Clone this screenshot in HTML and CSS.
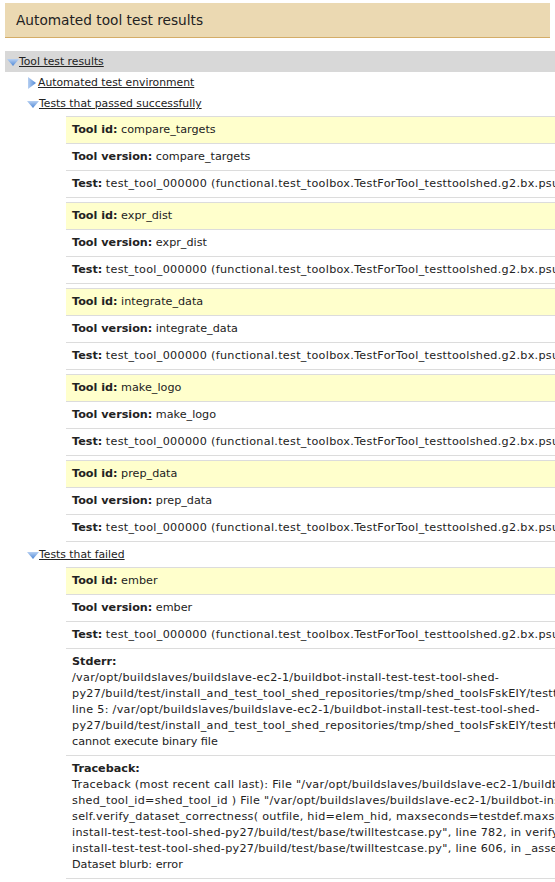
FILE: index.html
```html
<!DOCTYPE html>
<html>
<head>
<meta charset="utf-8">
<title>Automated tool test results</title>
<link rel="stylesheet" href="styles.css">
</head>
<body>
<div class="page">
  <div class="header"><h1 class="title">Automated tool test results</h1></div>

  <div class="tree">
    <div class="node node-root">
      <svg class="tri tri-down" width="12" height="7" viewBox="0 0 12 7"><defs><linearGradient id="gd" x1="0" y1="0" x2="0" y2="1"><stop offset="0" stop-color="#b7d0f2"/><stop offset="1" stop-color="#4f88d6"/></linearGradient></defs><polygon points="0,0 12,0 6,7" fill="url(#gd)"/></svg>
      <a class="link" href="#">Tool test results</a>
    </div>

    <div class="children">
      <div class="node">
        <svg class="tri tri-right" width="8" height="12" viewBox="0 0 8 12"><defs><linearGradient id="gr" x1="0" y1="0" x2="1" y2="0"><stop offset="0" stop-color="#b7d0f2"/><stop offset="1" stop-color="#4f88d6"/></linearGradient></defs><polygon points="0,0 8,6 0,12" fill="url(#gr)"/></svg>
        <a class="link" href="#">Automated test environment</a>
      </div>

      <div class="node">
        <svg class="tri tri-down" width="12" height="7" viewBox="0 0 12 7"><polygon points="0,0 12,0 6,7" fill="url(#gd)"/></svg>
        <a class="link" href="#">Tests that passed successfully</a>
      </div>

      <div class="tables">
        <div class="table">
          <div class="row row-id"><b>Tool id:</b> compare_targets</div>
          <div class="row"><b>Tool version:</b> compare_targets</div>
          <div class="row"><b>Test:</b> <span class="path">test_tool_000000 (functional.test_toolbox.TestForTool_testtoolshed.g2.bx.psu.edu_repos_boris_cnv_analysis_compare_targets_0.0.1)</span></div>
        </div>
        <div class="table">
          <div class="row row-id"><b>Tool id:</b> expr_dist</div>
          <div class="row"><b>Tool version:</b> expr_dist</div>
          <div class="row"><b>Test:</b> <span class="path">test_tool_000000 (functional.test_toolbox.TestForTool_testtoolshed.g2.bx.psu.edu_repos_boris_cnv_analysis_expr_dist_0.0.1)</span></div>
        </div>
        <div class="table">
          <div class="row row-id"><b>Tool id:</b> integrate_data</div>
          <div class="row"><b>Tool version:</b> integrate_data</div>
          <div class="row"><b>Test:</b> <span class="path">test_tool_000000 (functional.test_toolbox.TestForTool_testtoolshed.g2.bx.psu.edu_repos_boris_cnv_analysis_integrate_data_0.0.1)</span></div>
        </div>
        <div class="table">
          <div class="row row-id"><b>Tool id:</b> make_logo</div>
          <div class="row"><b>Tool version:</b> make_logo</div>
          <div class="row"><b>Test:</b> <span class="path">test_tool_000000 (functional.test_toolbox.TestForTool_testtoolshed.g2.bx.psu.edu_repos_boris_cnv_analysis_make_logo_0.0.1)</span></div>
        </div>
        <div class="table">
          <div class="row row-id"><b>Tool id:</b> prep_data</div>
          <div class="row"><b>Tool version:</b> prep_data</div>
          <div class="row"><b>Test:</b> <span class="path">test_tool_000000 (functional.test_toolbox.TestForTool_testtoolshed.g2.bx.psu.edu_repos_boris_cnv_analysis_prep_data_0.0.1)</span></div>
        </div>
      </div>

      <div class="node">
        <svg class="tri tri-down" width="12" height="7" viewBox="0 0 12 7"><polygon points="0,0 12,0 6,7" fill="url(#gd)"/></svg>
        <a class="link" href="#">Tests that failed</a>
      </div>

      <div class="tables">
        <div class="table">
          <div class="row row-id"><b>Tool id:</b> ember</div>
          <div class="row"><b>Tool version:</b> ember</div>
          <div class="row"><b>Test:</b> <span class="path">test_tool_000000 (functional.test_toolbox.TestForTool_testtoolshed.g2.bx.psu.edu_repos_boris_cnv_analysis_ember_0.0.1)</span></div>
          <div class="row block">
            <b>Stderr:</b><br>
            <span class="path">/var/opt/buildslaves/buildslave-ec2-1/buildbot-install-test-test-tool-shed-</span><br>
            <span class="path">py27/build/test/install_and_test_tool_shed_repositories/tmp/shed_toolsFskEIY/testtoolshed.g2.bx.psu.edu/repos/boris/cnv_analysis/ember: line 5:</span><br>
            <span class="path">line 5: /var/opt/buildslaves/buildslave-ec2-1/buildbot-install-test-test-tool-shed-</span><br>
            <span class="path">py27/build/test/install_and_test_tool_shed_repositories/tmp/shed_toolsFskEIY/testtoolshed.g2.bx.psu.edu/repos/boris/cnv_analysis/ember:</span><br>
            cannot execute binary file
          </div>
          <div class="row block">
            <b>Traceback:</b><br>
            <span class="path">Traceback (most recent call last): File "/var/opt/buildslaves/buildslave-ec2-1/buildbot-install-test-test-tool-shed-py27/build/test/functional/test_toolbox.py", line 136, in test_tool</span><br>
            <span class="path">shed_tool_id=shed_tool_id ) File "/var/opt/buildslaves/buildslave-ec2-1/buildbot-install-test-test-tool-shed-py27/build/test/base/twilltestcase.py", line 1186, in verify_dataset_correctness</span><br>
            <span class="path">self.verify_dataset_correctness( outfile, hid=elem_hid, maxseconds=testdef.maxseconds, attributes=attributes, shed_tool_id=shed_tool_id ) File "/var/opt/buildslaves/buildslave-ec2-1/buildbot-</span><br>
            <span class="path">install-test-test-tool-shed-py27/build/test/base/twilltestcase.py", line 782, in verify_dataset_correctness self._assert_dataset_state( elem, 'ok' ) File "/var/opt/buildslaves/buildslave-ec2-1/buildbot-</span><br>
            <span class="path">install-test-test-tool-shed-py27/build/test/base/twilltestcase.py", line 606, in _assert_dataset_state raise AssertionError( errmsg )</span><br>
            Dataset blurb: error
          </div>
        </div>
      </div>
    </div>
  </div>
</div>
</body>
</html>
```

FILE: styles.css
```css
html, body {
  margin: 0;
  padding: 0;
  background: #ffffff;
  overflow: hidden;
}

body {
  font-family: "DejaVu Sans", "Liberation Sans", sans-serif;
  font-size: 10.8px;
  color: #222222;
}

.page {
  padding: 3px 0 0 5px;
}

.header {
  width: 545px;
  height: 34px;
  background: #ebd9b2;
  border-bottom: 1px solid #d4ad68;
  display: flex;
  align-items: center;
}

.title {
  margin: 0;
  padding-left: 11px;
  font-size: 13.7px;
  font-weight: normal;
  color: #222222;
}

.tree {
  margin-top: 13px;
  width: 1100px;
}

.node {
  height: 21px;
  display: flex;
  align-items: center;
  white-space: nowrap;
}

.node-root {
  background: #d8d8d8;
  padding-left: 2px;
}

.children .node {
  padding-left: 22px;
}

.tri {
  display: block;
  flex: none;
}

.tri-down {
  margin-top: 1px;
}

.tri-right {
  margin-right: 2px;
  margin-left: 1px;
}

.link {
  color: #222222;
  text-decoration: underline;
}

.tables {
  margin: 2px 0 2px 61px;
  display: flex;
  flex-direction: column;
  gap: 4px;
}

.table {
  border-bottom: 1px solid #dcdcdc;
}

.row {
  border-top: 1px solid #dcdcdc;
  padding: 6px 6px;
  line-height: 14px;
  font-size: 11.2px;
  white-space: nowrap;
}

.row-id {
  background: #ffffcc;
}

.row b {
  font-weight: bold;
}

.block {
  padding-top: 5px;
  padding-bottom: 5px;
  line-height: 16px;
}

.path {
  letter-spacing: 0.3px;
}
```
